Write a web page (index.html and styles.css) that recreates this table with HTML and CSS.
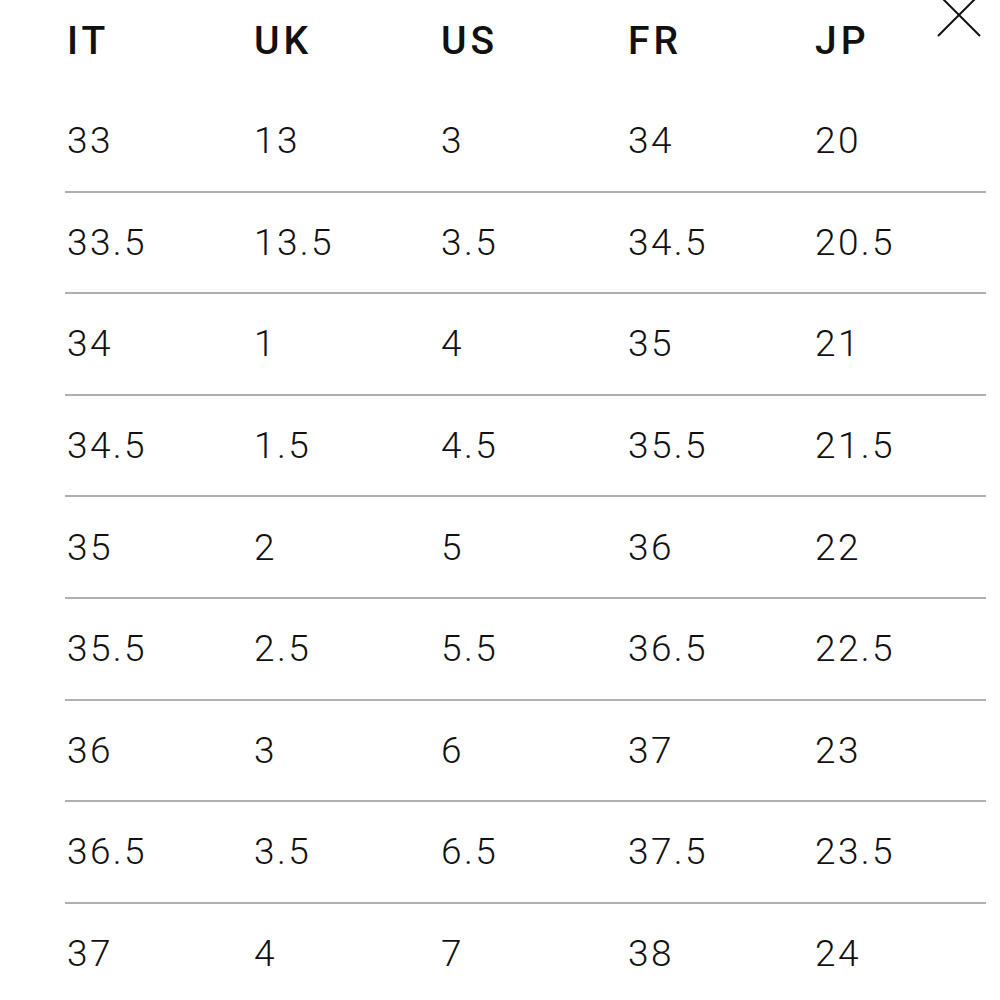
FILE: index.html
```html
<!DOCTYPE html>
<html>
<head>
<meta charset="utf-8">
<link rel="stylesheet" href="styles.css">
</head>
<body>
<div class="page">
  <button class="close" aria-label="Close">
    <svg width="48" height="48" viewBox="0 0 48 48"><path d="M3 3 L45 45 M45 3 L3 45" stroke="#111" stroke-width="2" fill="none"/></svg>
  </button>
  <div class="table">
    <div class="row head"><span>IT</span><span>UK</span><span>US</span><span>FR</span><span>JP</span></div>
    <div class="row"><span>33</span><span>13</span><span>3</span><span>34</span><span>20</span></div>
    <div class="row"><span>33.5</span><span>13.5</span><span>3.5</span><span>34.5</span><span>20.5</span></div>
    <div class="row"><span>34</span><span>1</span><span>4</span><span>35</span><span>21</span></div>
    <div class="row"><span>34.5</span><span>1.5</span><span>4.5</span><span>35.5</span><span>21.5</span></div>
    <div class="row"><span>35</span><span>2</span><span>5</span><span>36</span><span>22</span></div>
    <div class="row"><span>35.5</span><span>2.5</span><span>5.5</span><span>36.5</span><span>22.5</span></div>
    <div class="row"><span>36</span><span>3</span><span>6</span><span>37</span><span>23</span></div>
    <div class="row"><span>36.5</span><span>3.5</span><span>6.5</span><span>37.5</span><span>23.5</span></div>
    <div class="row last"><span>37</span><span>4</span><span>7</span><span>38</span><span>24</span></div>
  </div>
</div>
</body>
</html>
```

FILE: styles.css
```css
html, body {
  margin: 0;
  padding: 0;
  background: #fff;
}
body {
  font-family: Roboto, "Liberation Sans", sans-serif;
  color: #111;
  overflow: hidden;
}
.page {
  position: relative;
  width: 1000px;
  height: 1000px;
  padding-left: 65px;
  box-sizing: border-box;
}
.close {
  position: absolute;
  left: 935px;
  top: -9px;
  width: 48px;
  height: 48px;
  padding: 0;
  border: 0;
  background: none;
}
.close svg {
  display: block;
}
.table {
  width: 921px;
}
.row {
  display: grid;
  grid-template-columns: repeat(5, 187px);
  height: 99.6px;
  align-items: center;
  border-bottom: 2.2px solid #b0b0b0;
  font-size: 37px;
  font-weight: 300;
  letter-spacing: 2.4px;
}
.row span {
  padding-left: 2px;
}
.row.head {
  height: 82px;
  padding-bottom: 9px;
  border-bottom: 0;
  font-size: 39px;
  font-weight: 500;
  letter-spacing: 4px;
}
.row.head span {
  padding-left: 2px;
}
.row.last {
  border-bottom: 0;
}
```
